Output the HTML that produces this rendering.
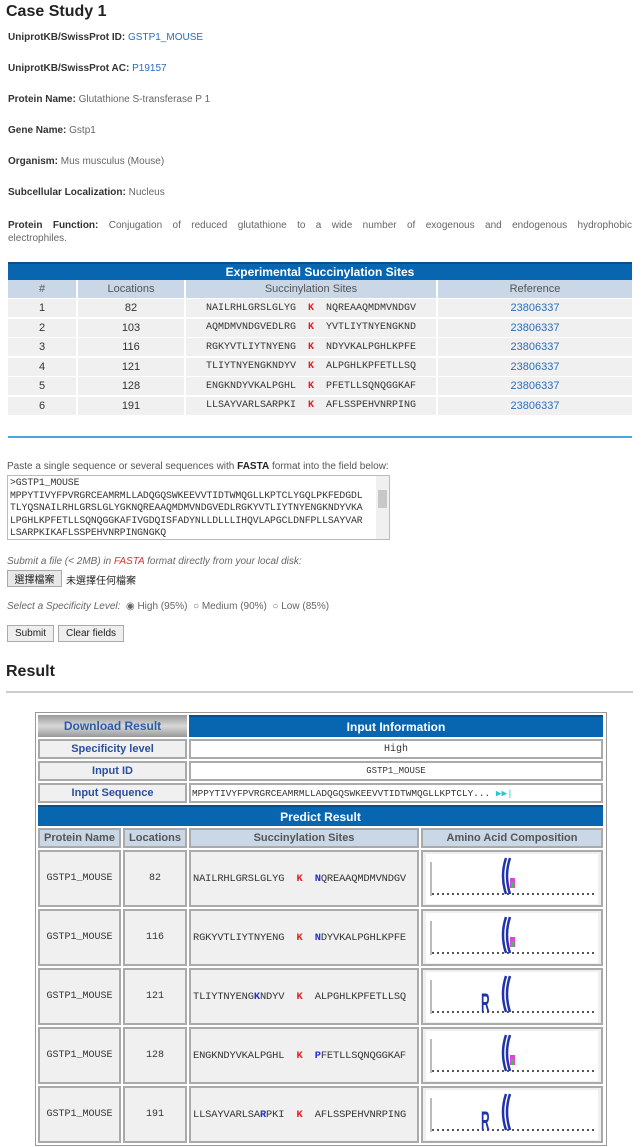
<!DOCTYPE html>
<html><head><meta charset="utf-8"><style>
*{margin:0;padding:0;box-sizing:border-box}
body{width:642px;height:1147px;background:#fff;font-family:"Liberation Sans",sans-serif;position:relative;overflow:hidden;color:#333}
.a{position:absolute}
.f{font-size:10px;color:#666;left:8px}
.f b{color:#333}
a{color:#2a6ebb;text-decoration:none}
.m{font-family:"Liberation Mono",monospace}
.c{display:flex;align-items:center;justify-content:center;position:absolute}
.hd{background:#0866b0;color:#fff;font-weight:bold;font-size:12px;border-top:2px solid #0a4f8c}
.ch{background:#c9d7e6;color:#555;font-size:11px}
.r{background:#f0f0f0;font-size:11px;color:#333}
.k{color:#e02020;font-weight:bold}
.bx{border:2px solid #aaa;background:#f0f0f0}
.b{color:#2233cc;font-weight:bold}
</style></head><body>
<div class="a" style="left:6px;top:3px;font-size:16px;font-weight:bold;color:#222">Case Study 1</div>
<div class="a f" style="top:32px"><b>UniprotKB/SwissProt ID:</b> <a>GSTP1_MOUSE</a></div>
<div class="a f" style="top:63px"><b>UniprotKB/SwissProt AC:</b> <a>P19157</a></div>
<div class="a f" style="top:94px"><b>Protein Name:</b> Glutathione S-transferase P 1</div>
<div class="a f" style="top:125px"><b>Gene Name:</b> Gstp1</div>
<div class="a f" style="top:156px"><b>Organism:</b> Mus musculus (Mouse)</div>
<div class="a f" style="top:187px"><b>Subcellular Localization:</b> Nucleus</div>
<div class="a f" style="top:218px;width:624px;text-align:justify;text-align-last:justify;line-height:15px"><b>Protein Function:</b> Conjugation of reduced glutathione to a wide number of exogenous and endogenous hydrophobic</div>
<div class="a f" style="top:233px">electrophiles.</div>

<div class="c hd" style="left:8px;top:262px;width:624px;height:18px">Experimental Succinylation Sites</div>
<div class="c ch" style="left:8px;top:280px;width:68px;height:18px">#</div>
<div class="c ch" style="left:78px;top:280px;width:106px;height:18px">Locations</div>
<div class="c ch" style="left:186px;top:280px;width:250px;height:18px">Succinylation Sites</div>
<div class="c ch" style="left:438px;top:280px;width:194px;height:18px">Reference</div>
<div id="t1"></div>
<div class="a" style="left:8px;top:436px;width:624px;height:2px;background:#44a8e0"></div>

<div class="a" style="left:7px;top:461px;font-size:10px;color:#555">Paste a single sequence or several sequences with <b style="color:#222">FASTA</b> format into the field below:</div>
<div class="a m" style="left:7px;top:475px;width:383px;height:65px;border:1px solid #bbb;font-size:9.8px;line-height:12.6px;padding:1px 2px;color:#333;white-space:pre;overflow:hidden;letter-spacing:-0.1px">&gt;GSTP1_MOUSE
MPPYTIVYFPVRGRCEAMRMLLADQGQSWKEEVVTIDTWMQGLLKPTCLYGQLPKFEDGDL
TLYQSNAILRHLGRSLGLYGKNQREAAQMDMVNDGVEDLRGKYVTLIYTNYENGKNDYVKA
LPGHLKPFETLLSQNQGGKAFIVGDQISFADYNLLDLLLIHQVLAPGCLDNFPLLSAYVAR
LSARPKIKAFLSSPEHVNRPINGNGKQ</div>
<div class="a" style="left:376px;top:476px;width:13px;height:63px;background:#f0f0f0"><div style="margin:14px 2px;height:18px;background:#c8c8c8"></div></div>
<div class="a" style="left:7px;top:556px;font-size:10px;color:#666;font-style:italic">Submit a file (&lt; 2MB) in <span style="color:#e03030">FASTA</span> format directly from your local disk:</div>
<div class="c" style="left:7px;top:570px;width:55px;height:17px;border:1px solid #aaa;background:#e8e8e8;font-size:10px;font-family:'Liberation Sans','Noto Sans CJK TC',sans-serif;color:#222">選擇檔案</div>
<div class="a" style="left:66px;top:572px;font-size:10px;font-family:'Liberation Sans','Noto Sans CJK TC',sans-serif;color:#222">未選擇任何檔案</div>
<div class="a" style="left:7px;top:601px;font-size:10px;color:#666"><i>Select a Specificity Level:</i> &nbsp;◉ High (95%) &nbsp;○ Medium (90%) &nbsp;○ Low (85%)</div>
<div class="c" style="left:7px;top:625px;width:47px;height:17px;border:1px solid #aaa;background:#eee;font-size:10px;color:#222">Submit</div>
<div class="c" style="left:58px;top:625px;width:66px;height:17px;border:1px solid #aaa;background:#eee;font-size:10px;color:#222">Clear fields</div>
<div class="a" style="left:6px;top:663px;font-size:16px;font-weight:bold;color:#222">Result</div>
<div class="a" style="left:6px;top:691px;width:627px;height:2px;background:#ccc"></div>

<div class="a" style="left:35px;top:712px;width:572px;height:434px;border:1px solid #999;background:#fff"></div>
<div class="c" style="left:38px;top:715px;width:149px;height:22px;background:linear-gradient(#999,#d8d8d8 50%,#999);color:#2a5fa8;font-weight:bold;font-size:12px">Download Result</div>
<div class="c hd" style="left:189px;top:715px;width:414px;height:22px">Input Information</div>
<div class="c bx" style="left:38px;top:739px;width:149px;height:20px;font-size:11px;font-weight:bold;color:#2a4fa0">Specificity level</div>
<div class="c" style="left:189px;top:739px;width:414px;height:20px;border:2px solid #aaa;font-size:10px" ><span class="m">High</span></div>
<div class="c bx" style="left:38px;top:761px;width:149px;height:20px;font-size:11px;font-weight:bold;color:#2a4fa0">Input ID</div>
<div class="c m" style="left:189px;top:761px;width:414px;height:20px;border:2px solid #aaa;font-size:9px">GSTP1_MOUSE</div>
<div class="c bx" style="left:38px;top:783px;width:149px;height:20px;font-size:11px;font-weight:bold;color:#2a4fa0">Input Sequence</div>
<div class="a m" style="left:189px;top:783px;width:414px;height:20px;border:2px solid #aaa;font-size:9.4px;padding:3px 1px;white-space:nowrap;overflow:hidden">MPPYTIVYFPVRGRCEAMRMLLADQGQSWKEEVVTIDTWMQGLLKPTCLY... <span style="color:#2cc">▶▶|</span></div>
<div class="c hd" style="left:38px;top:805px;width:565px;height:21px">Predict Result</div>
<div class="c ch" style="left:38px;top:828px;width:83px;height:20px;font-weight:bold;border:2px solid #aaa">Protein Name</div>
<div class="c ch" style="left:123px;top:828px;width:64px;height:20px;font-weight:bold;border:2px solid #aaa">Locations</div>
<div class="c ch" style="left:189px;top:828px;width:230px;height:20px;font-weight:bold;border:2px solid #aaa">Succinylation Sites</div>
<div class="c ch" style="left:421px;top:828px;width:182px;height:20px;font-weight:bold;border:2px solid #aaa">Amino Acid Composition</div>
<div id="t2"></div>
<script>
var d=[["1","82","NAILRHLGRSLGLYG","NQREAAQMDMVNDGV"],["2","103","AQMDMVNDGVEDLRG","YVTLIYTNYENGKND"],["3","116","RGKYVTLIYTNYENG","NDYVKALPGHLKPFE"],["4","121","TLIYTNYENGKNDYV","ALPGHLKPFETLLSQ"],["5","128","ENGKNDYVKALPGHL","PFETLLSQNQGGKAF"],["6","191","LLSAYVARLSARPKI","AFLSSPEHVNRPING"]];
var h="";
d.forEach(function(r,i){var y=299+i*19.5;
h+='<div class="c r" style="left:8px;top:'+y+'px;width:68px;height:18px">'+r[0]+'</div>';
h+='<div class="c r" style="left:78px;top:'+y+'px;width:106px;height:18px">'+r[1]+'</div>';
h+='<div class="c r m" style="left:186px;top:'+y+'px;width:250px;height:18px;font-size:10px">'+r[2]+'&nbsp;&nbsp;<span class="k">K</span>&nbsp;&nbsp;'+r[3]+'</div>';
h+='<div class="c r" style="left:438px;top:'+y+'px;width:194px;height:18px"><a>23806337</a></div>';});
document.getElementById("t1").innerHTML=h;
var e=[["82",'NAILRHLGRSLGLYG','<span class="b">N</span>QREAAQMDMVNDGV',0],["116",'RGKYVTLIYTNYENG','<span class="b">N</span>DYVKALPGHLKPFE',0],["121",'TLIYTNYENG<span class="b">K</span>NDYV','ALPGHLKPFETLLSQ',1],["128",'ENGKNDYVKALPGHL','<span class="b">P</span>FETLLSQNQGGKAF',0],["191",'LLSAYVARLSA<span class="b">R</span>PKI','AFLSSPEHVNRPING',1]];
h="";
e.forEach(function(r,i){var y=850+i*59;
h+='<div class="c bx m" style="left:38px;top:'+y+'px;width:83px;height:57px;font-size:10px">GSTP1_MOUSE</div>';
h+='<div class="c bx m" style="left:123px;top:'+y+'px;width:64px;height:57px;font-size:10px">'+r[0]+'</div>';
h+='<div class="c bx m" style="left:189px;top:'+y+'px;width:230px;height:57px;font-size:10.4px;justify-content:flex-start;padding-left:2px;white-space:nowrap;letter-spacing:-0.15px">'+r[1]+'&nbsp;&nbsp;<span class="k">K</span>&nbsp;&nbsp;'+r[2]+'</div>';
var lg='<svg width="172" height="50" style="background:#fff"><line x1="6" y1="40" x2="168" y2="40" stroke="#555" stroke-dasharray="2,3" stroke-width="2"/><line x1="5" y1="8" x2="5" y2="42" stroke="#777"/><path d="M80 4 Q74 22 80 40 M84 4 Q78 22 84 40" stroke="#2233aa" stroke-width="2.5" fill="none"/>'+(r[3]?'<g transform="translate(0,40) scale(1,2.2) translate(0,-40)"><text x="55" y="40" font-size="12" font-weight="bold" fill="#2233aa" font-family="Liberation Sans">R</text></g>':'<rect x="84" y="24" width="5" height="10" fill="#d4d"/><rect x="85" y="28" width="3" height="6" fill="#3c3"/>')+'</svg>';
h+='<div class="c bx" style="left:421px;top:'+y+'px;width:182px;height:57px">'+lg+'</div>';});
document.getElementById("t2").innerHTML=h;
</script>
</body></html>
